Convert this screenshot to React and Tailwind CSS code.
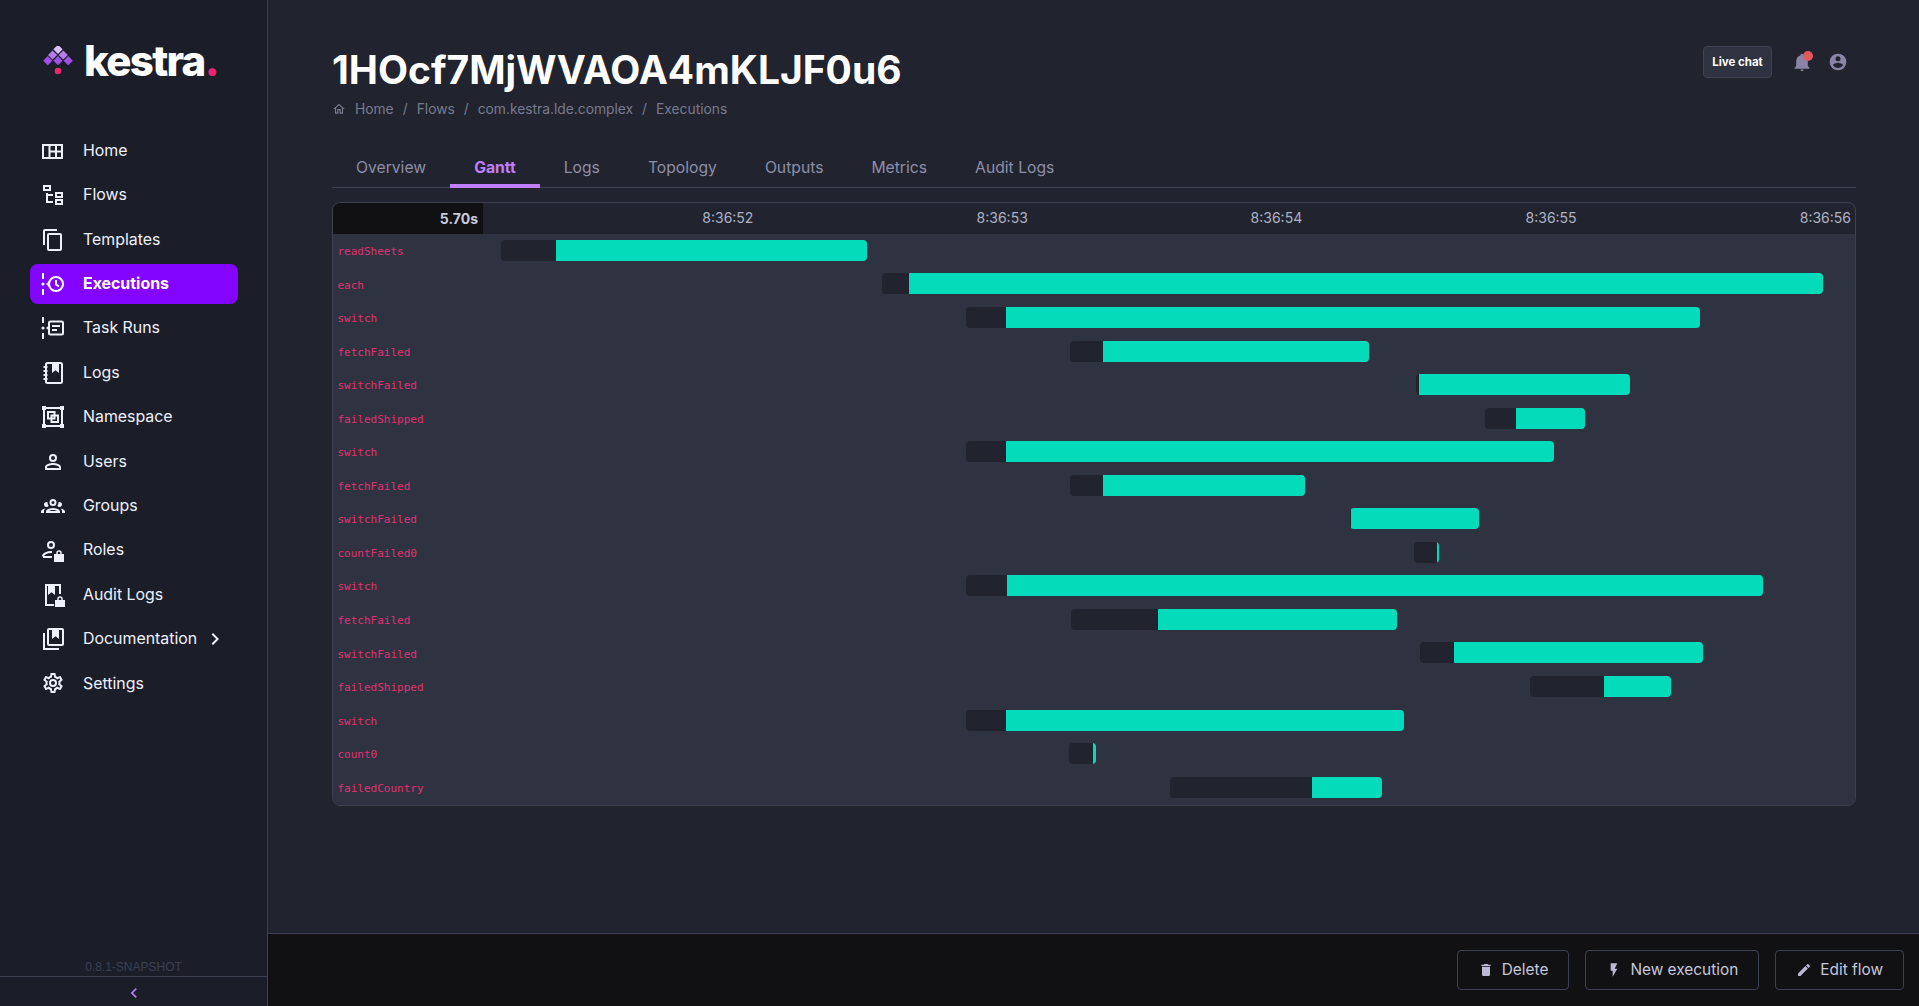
import React from "react";

const Icon = ({ d, size = 24, className = "" }) => (
  <svg viewBox="0 0 24 24" width={size} height={size} fill="currentColor" className={className}>
    <path d={d} />
  </svg>
);

const paths = {
  flows: "M12 13H7v5h5v2H5V10h2v1h5v2M8 4v2H4V4h4m2-2H2v6h8V2m10 9v2h-4v-2h4m2-2h-8v6h8V9m-2 9v2h-4v-2h4m2-2h-8v6h8v-6Z",
  templates: "M19,21H8V7H19M19,5H8A2,2 0 0,0 6,7V21A2,2 0 0,0 8,23H19A2,2 0 0,0 21,21V7A2,2 0 0,0 19,5M16,1H4A2,2 0 0,0 2,3V17H4V3H16V1Z",
  users: "M12,4A4,4 0 0,1 16,8A4,4 0 0,1 12,12A4,4 0 0,1 8,8A4,4 0 0,1 12,4M12,6A2,2 0 0,0 10,8A2,2 0 0,0 12,10A2,2 0 0,0 14,8A2,2 0 0,0 12,6M12,13C14.67,13 20,14.33 20,17V20H4V17C4,14.33 9.33,13 12,13M12,14.9C9.03,14.9 5.9,16.36 5.9,17V18.1H18.1V17C18.1,16.36 14.97,14.9 12,14.9Z",
  groups: "M12,5A3.5,3.5 0 0,0 8.5,8.5A3.5,3.5 0 0,0 12,12A3.5,3.5 0 0,0 15.5,8.5A3.5,3.5 0 0,0 12,5M12,7A1.5,1.5 0 0,1 13.5,8.5A1.5,1.5 0 0,1 12,10A1.5,1.5 0 0,1 10.5,8.5A1.5,1.5 0 0,1 12,7M5.5,8A2.5,2.5 0 0,0 3,10.5C3,11.44 3.53,12.25 4.29,12.68C4.65,12.88 5.06,13 5.5,13C5.94,13 6.35,12.88 6.71,12.68C7.08,12.47 7.39,12.17 7.62,11.81C6.89,10.86 6.5,9.7 6.5,8.5C6.5,8.41 6.5,8.31 6.5,8.22C6.2,8.08 5.86,8 5.5,8M18.5,8C18.14,8 17.8,8.08 17.5,8.22C17.5,8.31 17.5,8.41 17.5,8.5C17.5,9.7 17.11,10.86 16.38,11.81C16.5,12 16.63,12.15 16.78,12.3C16.94,12.45 17.1,12.58 17.29,12.68C17.65,12.88 18.06,13 18.5,13C18.94,13 19.35,12.88 19.71,12.68C20.47,12.25 21,11.44 21,10.5A2.5,2.5 0 0,0 18.5,8M12,14C9.66,14 5,15.17 5,17.5V19H19V17.5C19,15.17 14.34,14 12,14M4.71,14.55C2.78,14.78 0,15.76 0,17.5V19H3V17.07C3,16.06 3.69,15.22 4.71,14.55M19.29,14.55C20.31,15.22 21,16.06 21,17.07V19H24V17.5C24,15.76 21.22,14.78 19.29,14.55M12,16C13.53,16 15.24,16.5 16.23,17H7.77C8.76,16.5 10.47,16 12,16Z",
  settings: "M12,8A4,4 0 0,1 16,12A4,4 0 0,1 12,16A4,4 0 0,1 8,12A4,4 0 0,1 12,8M12,10A2,2 0 0,0 10,12A2,2 0 0,0 12,14A2,2 0 0,0 14,12A2,2 0 0,0 12,10M10,22C9.75,22 9.54,21.82 9.5,21.58L9.13,18.93C8.5,18.68 7.96,18.34 7.44,17.94L4.95,18.95C4.73,19.03 4.46,18.95 4.34,18.73L2.34,15.27C2.21,15.05 2.27,14.78 2.46,14.63L4.57,12.97L4.5,12L4.57,11L2.46,9.37C2.27,9.22 2.21,8.95 2.34,8.73L4.34,5.27C4.46,5.05 4.73,4.96 4.95,5.05L7.44,6.05C7.96,5.66 8.5,5.32 9.13,5.07L9.5,2.42C9.54,2.18 9.75,2 10,2H14C14.25,2 14.46,2.18 14.5,2.42L14.87,5.07C15.5,5.32 16.04,5.66 16.56,6.05L19.05,5.05C19.27,4.96 19.54,5.05 19.66,5.27L21.66,8.73C21.79,8.95 21.73,9.22 21.54,9.37L19.43,11L19.5,12L19.43,13L21.54,14.63C21.73,14.78 21.79,15.05 21.66,15.27L19.66,18.73C19.54,18.95 19.27,19.04 19.05,18.95L16.56,17.95C16.04,18.34 15.5,18.68 14.87,18.93L14.5,21.58C14.46,21.82 14.25,22 14,22H10M11.25,4L10.88,6.61C9.68,6.86 8.62,7.5 7.85,8.39L5.44,7.35L4.69,8.65L6.8,10.2C6.4,11.37 6.4,12.64 6.8,13.8L4.68,15.36L5.43,16.66L7.86,15.62C8.63,16.5 9.68,17.14 10.87,17.38L11.24,20H12.76L13.13,17.39C14.32,17.14 15.37,16.5 16.14,15.62L18.57,16.66L19.32,15.36L17.2,13.81C17.6,12.64 17.6,11.37 17.2,10.2L19.31,8.65L18.56,7.35L16.15,8.39C15.38,7.5 14.32,6.86 13.12,6.62L12.75,4H11.25Z",
  chevron: "M8.59,16.58L13.17,12L8.59,7.41L10,6L16,12L10,18L8.59,16.58Z",
  chevronLeft: "M15.41,16.58L10.83,12L15.41,7.41L14,6L8,12L14,18L15.41,16.58Z",
  home: "M12 5.69l5 4.5V18h-2v-6H9v6H7v-7.81l5-4.5M12 3L2 12h3v8h6v-6h2v6h6v-8h3L12 3z",
  bell: "M21,19V20H3V19L5,17V11C5,7.9 7.03,5.17 10,4.29C10,4.19 10,4.1 10,4A2,2 0 0,1 12,2A2,2 0 0,1 14,4C14,4.1 14,4.19 14,4.29C16.97,5.17 19,7.9 19,11V17L21,19M14,21A2,2 0 0,1 12,23A2,2 0 0,1 10,21",
  account: "M12,19.2C9.5,19.2 7.29,17.92 6,16C6.03,14 10,12.9 12,12.9C14,12.9 17.97,14 18,16C16.71,17.92 14.5,19.2 12,19.2M12,5A3,3 0 0,1 15,8A3,3 0 0,1 12,11A3,3 0 0,1 9,8A3,3 0 0,1 12,5M12,2A10,10 0 0,0 2,12A10,10 0 0,0 12,22A10,10 0 0,0 22,12A10,10 0 0,0 12,2Z",
  trash: "M19,4H15.5L14.5,3H9.5L8.5,4H5V6H19M6,19A2,2 0 0,0 8,21H16A2,2 0 0,0 18,19V7H6V19Z",
  flash: "M7,2V13H10V22L17,10H13L17,2H7Z",
  pencil: "M20.71,7.04C21.1,6.65 21.1,6 20.71,5.63L18.37,3.29C18,2.9 17.35,2.9 16.96,3.29L15.12,5.12L18.87,8.87M3,17.25V21H6.75L17.81,9.93L14.06,6.18L3,17.25Z",
};

// hand drawn ones, the icon packages don't have these
const Drawn = ({ children }) => (
  <svg viewBox="0 0 24 24" width="24" height="24" fill="none" stroke="currentColor" strokeWidth="2">
    {children}
  </svg>
);

const HomeIcon = () => (
  <Drawn>
    <rect x="2" y="6" width="19" height="13" />
    <path d="M8.5 6v13M15 6v13M8.5 12.5H21" />
  </Drawn>
);

const TimelineRail = () => (
  <>
    <path d="M2 1v6M2 17v6" />
    <circle cx="2" cy="12" r="1.6" fill="currentColor" stroke="none" />
    <path d="M5 12l3-2.5v5z" fill="currentColor" stroke="none" />
  </>
);

const ExecutionsIcon = () => (
  <Drawn>
    <TimelineRail />
    <circle cx="15" cy="12" r="7" />
    <path d="M15 8v4.5l3 2" />
  </Drawn>
);

const TaskRunsIcon = () => (
  <Drawn>
    <TimelineRail />
    <rect x="8" y="5.5" width="14" height="13" rx="1.5" />
    <path d="M11 10h8M11 14h5" />
  </Drawn>
);

const LogsIcon = () => (
  <Drawn>
    <rect x="5" y="2" width="16" height="20" rx="1.5" />
    <path d="M12 2v8l2.5-2 2.5 2V2" fill="currentColor" />
    <path d="M2.5 6h4M2.5 10h4M2.5 14h4M2.5 18h4" />
  </Drawn>
);

const NamespaceIcon = () => (
  <Drawn>
    <rect x="3" y="3" width="18" height="18" />
    <path d="M1 1h4v4H1zM19 1h4v4h-4zM1 19h4v4H1zM19 19h4v4h-4z" fill="currentColor" stroke="none" />
    <rect x="7" y="7" width="6.5" height="6.5" />
    <rect x="10.5" y="10.5" width="6.5" height="6.5" />
  </Drawn>
);

const RolesIcon = () => (
  <Drawn>
    <circle cx="10" cy="7" r="3" />
    <path d="M2 18.5c0-3 5-4.5 8-4.5h1M2 19h9" />
    <path d="M14 17h8v6h-8z" fill="currentColor" />
    <path d="M16 17v-2a2 2 0 0 1 4 0v2" strokeWidth="1.5" />
  </Drawn>
);

const AuditIcon = () => (
  <Drawn>
    <path d="M13 22H5V2h14v9" />
    <path d="M8 2v8l2.5-2 2.5 2V2" fill="currentColor" />
    <path d="M15 18h8v5h-8z" fill="currentColor" />
    <path d="M17 18v-2a2 2 0 0 1 4 0v2" strokeWidth="1.5" />
  </Drawn>
);

const DocsIcon = () => (
  <Drawn>
    <rect x="7" y="2" width="15" height="16" rx="1" />
    <path d="M3 6v16h15" />
    <path d="M12 2v8l2.5-2 2.5 2V2" fill="currentColor" />
  </Drawn>
);

const navItems = [
  { label: "Home", icon: <HomeIcon /> },
  { label: "Flows", icon: <Icon d={paths.flows} /> },
  { label: "Templates", icon: <Icon d={paths.templates} /> },
  { label: "Executions", icon: <ExecutionsIcon />, active: true },
  { label: "Task Runs", icon: <TaskRunsIcon /> },
  { label: "Logs", icon: <LogsIcon /> },
  { label: "Namespace", icon: <NamespaceIcon /> },
  { label: "Users", icon: <Icon d={paths.users} /> },
  { label: "Groups", icon: <Icon d={paths.groups} /> },
  { label: "Roles", icon: <RolesIcon /> },
  { label: "Audit Logs", icon: <AuditIcon /> },
  { label: "Documentation", icon: <DocsIcon />, more: true },
  { label: "Settings", icon: <Icon d={paths.settings} /> },
];

const tabs = ["Overview", "Gantt", "Logs", "Topology", "Outputs", "Metrics", "Audit Logs"];
const crumbs = ["Home", "Flows", "com.kestra.lde.complex", "Executions"];
const times = ["8:36:52", "8:36:53", "8:36:54", "8:36:55", "8:36:56"];

// x pixels: where the wait starts, where the run starts, where it ends
const TRACK_LEFT = 483;
const rows = [
  ["readSheets", 501, 556, 867],
  ["each", 882, 909, 1823],
  ["switch", 966, 1006, 1700],
  ["fetchFailed", 1070, 1103, 1369],
  ["switchFailed", 1416, 1419, 1630],
  ["failedShipped", 1485, 1516, 1585],
  ["switch", 966, 1006, 1554],
  ["fetchFailed", 1070, 1103, 1305],
  ["switchFailed", 1350, 1351, 1479],
  ["countFailed0", 1414, 1437, 1439],
  ["switch", 966, 1007, 1763],
  ["fetchFailed", 1071, 1158, 1397],
  ["switchFailed", 1420, 1454, 1703],
  ["failedShipped", 1530, 1604, 1671],
  ["switch", 966, 1006, 1404],
  ["count0", 1069, 1093, 1096],
  ["failedCountry", 1170, 1312, 1382],
];

const Logo = () => (
  <svg viewBox="0 0 30 30" width="30" height="30">
    <path d="M15 -1.3l4.6 4.6-4.6 4.6-4.6-4.6z" fill="#d9c0f7" />
    <path d="M9.6 4.4l4.6 4.6-4.6 4.6-4.6-4.6zM20.2 4.4l4.6 4.6-4.6 4.6-4.6-4.6z" fill="#b57fe9" />
    <path d="M4.8 10.1l4.6 4.6-4.6 4.6-4.6-4.6zM15 10.1l4.6 4.6-4.6 4.6-4.6-4.6zM25.2 10.1l4.6 4.6-4.6 4.6-4.6-4.6z" fill="#a04fe8" />
    <circle cx="15" cy="25" r="3.3" fill="#f0246e" />
  </svg>
);

const Sidebar = () => (
  <aside className="w-[268px] shrink-0 flex flex-col bg-[#1b1e29] border-r border-[#3d4050]">
    <div className="h-[130.8px] shrink-0 flex items-start pl-[43px] pt-[36px] gap-[11px]">
      <div className="mt-[10px]">
        <Logo />
      </div>
      <span className="text-[42px] leading-[50px] font-extrabold tracking-[-1.7px] text-white">
        kestra<span className="text-[#f0246e]">.</span>
      </span>
    </div>
    <nav className="flex-1 flex flex-col pl-[30px] pr-[29px]">
      {navItems.map((item) => (
        <div
          key={item.label}
          className={`h-10 mb-[4.4px] shrink-0 flex items-center pl-[11px] rounded-lg text-[15.9px] ${
            item.active ? "bg-[#8405ff] text-white font-bold" : "text-[#eef0fb]"
          }`}
        >
          <span className="w-[42px] shrink-0 flex items-center">{item.icon}</span>
          <span>{item.label}</span>
          {item.more && <Icon d={paths.chevron} className="ml-[6px]" />}
        </div>
      ))}
    </nav>
    <div className="h-[18px] pb-[2px] text-center text-xs leading-[16px] text-[#3c3f52] font-['Liberation_Sans',sans-serif]">
      0.8.1-SNAPSHOT
    </div>
    <div className="h-[30px] mt-[-1px] pt-[2px] border-t border-[#3d4050] flex items-center justify-center text-[#b57bff]">
      <Icon d={paths.chevronLeft} size={20} />
    </div>
  </aside>
);

const GanttRow = ({ row }) => {
  const [name, start, runStart, end] = row;
  return (
    <div className="h-[33.56px] flex items-center">
      <div className="w-[150px] shrink-0 pl-[4.5px] pt-[3px] font-['DejaVu_Sans_Mono',monospace] text-[11px] text-[#e0316f]">
        {name}
      </div>
      <div
        className="h-[21px] mb-[0.8px] flex rounded-sm overflow-hidden"
        style={{ marginLeft: start - TRACK_LEFT, width: end - start }}
      >
        <div className="bg-[#21242f]" style={{ width: runStart - start }} />
        <div className="flex-1 bg-[#03dbbb]" />
      </div>
    </div>
  );
};

const Gantt = () => (
  <div className="mt-[14px] border border-[#3d4050] rounded-lg overflow-hidden">
    <div className="h-[31px] flex items-center text-sm text-[#aeb1c6]">
      <div className="w-[150px] h-full shrink-0 bg-[#111114] flex items-center justify-end pr-[5px] font-bold text-[#c8cbdc]">
        5.70s
      </div>
      {times.map((t) => (
        <div key={t} className="flex-1 text-right pr-[4px] pb-[1px]">
          {t}
        </div>
      ))}
    </div>
    <div className="bg-[#2f3341] pb-[1px]">
      {rows.map((row, i) => (
        <GanttRow key={i} row={row} />
      ))}
    </div>
  </div>
);

const FooterButton = ({ icon, children }) => (
  <button className="h-10 px-[20px] flex items-center gap-[8px] border border-[#3d4050] rounded text-[15.4px] text-[#c5c8da]">
    <Icon d={icon} size={16} className="text-[#bdb8d4]" />
    <span className="pb-[1px]">{children}</span>
  </button>
);

export default function App() {
  return (
    <div className="h-screen flex overflow-hidden bg-[#21242e] font-['Inter',sans-serif]">
      <Sidebar />
      <main className="flex-1 min-w-0 flex flex-col">
        <div className="flex-1 pl-16 pr-[63px] pt-[46px]">
          {/* Title and top right actions */}
          <div className="h-12 flex items-start justify-between">
            <h1 className="text-[39px] leading-[48px] font-bold text-white">1HOcf7MjWVAOA4mKLJF0u6</h1>
            <div className="flex items-center pr-[8px]">
              <button className="h-8 w-[69px] pt-[1px] rounded bg-[#2f3240] border border-[#3f4252] text-[11.5px] font-bold text-white">
                Live chat
              </button>
              <div className="relative ml-[20px] text-[#8a84a6]">
                <Icon d={paths.bell} size={20} />
                <span className="absolute top-[-1px] right-[-1px] w-[10px] h-[10px] rounded-full bg-[#e5575f]" />
              </div>
              <Icon d={paths.account} size={20} className="ml-[16px] text-[#8a84a6]" />
            </div>
          </div>
          <div className="mt-1 h-[22px] flex items-center text-[13.8px] text-[#787a90]">
            <Icon d={paths.home} size={14} className="mr-[9px]" />
            {crumbs.map((c, i) => (
              <React.Fragment key={c}>
                {i > 0 && <span className="mx-[9px]">/</span>}
                <span>{c}</span>
              </React.Fragment>
            ))}
          </div>
          {/* Tabs */}
          <div className="mt-[27px] h-[41px] flex border-b border-[#3d4050]">
            {tabs.map((t) => (
              <div
                key={t}
                className={`px-6 h-[41px] pt-[4px] flex items-center text-[15.7px] border-b-4 ${
                  t === "Gantt"
                    ? "font-bold text-[#c17efc] border-[#c17efc]"
                    : "text-[#8e8ea8] border-transparent"
                }`}
              >
                {t}
              </div>
            ))}
          </div>
          <Gantt />
        </div>
        {/* Footer actions */}
        <div className="h-[73px] shrink-0 border-t border-[#3d4050] bg-[#111114] flex items-center justify-end gap-4 pr-[15px]">
          <FooterButton icon={paths.trash}>Delete</FooterButton>
          <FooterButton icon={paths.flash}>New execution</FooterButton>
          <FooterButton icon={paths.pencil}>Edit flow</FooterButton>
        </div>
      </main>
    </div>
  );
}
